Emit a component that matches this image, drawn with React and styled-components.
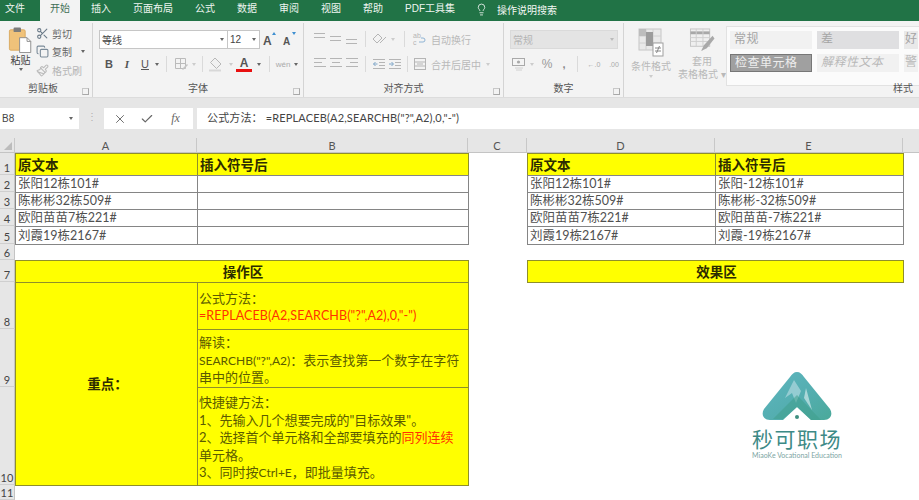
import React from "react";
import styled, { createGlobalStyle } from "styled-components";
import { Scissors, Copy, Paintbrush, Lightbulb, X, Check } from "lucide-react";

const GlobalStyle = createGlobalStyle`
	html, body {
		margin: 0;
		padding: 0;
		height: 500px;
		overflow: hidden;
		background: #ffffff;
		font-family: "Liberation Sans", "Noto Sans CJK SC", sans-serif;
	}
`;

const CJK = `"Liberation Sans", "Noto Sans CJK SC", sans-serif`;
const SHEET_FONT = `Lato, "Noto Sans CJK SC", sans-serif`;

const Page = styled.div`
	width: 919px;
	height: 500px;
	display: flex;
	flex-direction: column;
	overflow: hidden;
`;

/* tabs */
const TabBar = styled.div`
	height: 21px;
	box-sizing: border-box;
	background: #217346;
	display: flex;
	align-items: flex-start;
	color: #f4f8f5;
	font-size: 10px;
	flex-shrink: 0;
`;
const Tab = styled.div`
	height: ${(p) => (p.$active ? "21px" : "20px")};
	line-height: 17px;
	padding: 0 ${(p) => p.$pad ?? 11}px 0 ${(p) => p.$padLeft ?? p.$pad ?? 11}px;
	background: ${(p) => (p.$active ? "#f3f3f3" : "transparent")};
	color: ${(p) => (p.$active ? "#3f6f55" : "#eef5f0")};
`;
const Search = styled.div`
	margin-left: 9px;
	display: flex;
	align-items: center;
	gap: 9px;
	height: 18px;
`;

/* ribbon */
const Ribbon = styled.div`
	height: 77px;
	background: #f3f3f3;
	display: flex;
	flex-shrink: 0;
	padding-top: 2px;
	box-sizing: border-box;
	border-bottom: 1px solid #dcdcdc;
`;
const Group = styled.div`
	width: ${(p) => p.$w}px;
	flex-shrink: 0;
	display: flex;
	flex-direction: column;
	position: relative;
	border-right: ${(p) => (p.$last ? "none" : "1px solid #d4d4d4")};
	box-sizing: border-box;
	height: 74px;
`;
const GroupBody = styled.div`
	flex: 1;
	display: flex;
	min-height: 0;
`;
const GroupLabel = styled.div`
	height: 16px;
	line-height: 15px;
	text-align: ${(p) => p.$align ?? "center"};
	font-size: 10px;
	color: #555;
	padding-right: ${(p) => p.$right ?? 0}px;
`;
const Launcher = styled.span`
	position: absolute;
	right: 3px;
	bottom: 2px;
	width: 5px;
	height: 5px;
	border: 1px solid #a8a8a8;
	border-top-color: #c8c8c8;
	border-left-color: #c8c8c8;
`;
const PasteColumn = styled.div`
	width: 31px;
	flex-shrink: 0;
	padding: 4px 0 0 5px;
	font-size: 10px;
	color: #444;
	line-height: 13px;
	display: flex;
	flex-direction: column;
	align-items: center;
	gap: 1px;
`;
const ClipColumn = styled.div`
	display: flex;
	flex-direction: column;
	gap: 2.5px;
	padding: 2px 0 0 0;
	font-size: 10px;
`;
const ClipRow = styled.div`
	height: 16px;
	display: flex;
	align-items: center;
	gap: 3px;
	white-space: nowrap;
	color: ${(p) => (p.$dim ? "#b5b5b5" : "#666")};
`;
const Stack = styled.div`
	display: flex;
	flex-direction: column;
	padding: ${(p) => p.$pad ?? "6px 0 0 7px"};
	gap: ${(p) => p.$gap ?? 6}px;
`;
const ToolRow = styled.div`
	height: 20px;
	display: flex;
	align-items: center;
`;
const SelectBox = styled.div`
	width: ${(p) => p.$w}px;
	height: 19px;
	box-sizing: border-box;
	background: ${(p) => (p.$off ? "#e4e4e4" : "#ffffff")};
	border: 1px solid ${(p) => (p.$off ? "#dadada" : "#c6c6c6")};
	display: flex;
	align-items: center;
	justify-content: space-between;
	padding: 0 3px 0 2px;
	font-size: 10px;
	color: ${(p) => (p.$off ? "#b4b4b4" : "#444")};
	margin-left: -1px;
`;
const Tool = styled.span`
	display: inline-flex;
	justify-content: center;
	align-items: center;
	width: ${(p) => p.$w ?? 18}px;
	font-family: ${(p) => (p.$serif ? `"Liberation Serif", serif` : CJK)};
	font-size: ${(p) => p.$size ?? 11}px;
	font-weight: ${(p) => (p.$bold ? 700 : 400)};
	font-style: ${(p) => (p.$italic ? "italic" : "normal")};
	text-decoration: ${(p) => (p.$under ? "underline" : "none")};
	color: ${(p) => p.$color ?? "#555"};
`;
const FontColor = styled(Tool)`
	border-bottom: 3px solid #e81010;
	line-height: 12px;
`;
const Caret = styled.span`
	display: inline-block;
	flex-shrink: 0;
	width: 0;
	height: 0;
	border-left: 2.5px solid transparent;
	border-right: 2.5px solid transparent;
	border-top: 3px solid ${(p) => p.$color ?? "#666"};
	margin: 0 ${(p) => p.$gap ?? 4}px;
`;
const Sep = styled.span`
	width: 1px;
	height: 16px;
	background: #dadada;
	margin: 0 ${(p) => p.$gap ?? 4}px;
`;
const DimText = styled.span`
	font-size: 10px;
	color: #b9b9b9;
	margin-left: 3px;
	white-space: nowrap;
`;
const BigButton = styled.div`
	width: ${(p) => p.$w}px;
	flex-shrink: 0;
	display: flex;
	flex-direction: column;
	align-items: center;
	padding-top: 5px;
	font-size: 10px;
	line-height: 13px;
	color: #b9b9b9;
	text-align: center;
	gap: 2px;
	white-space: nowrap;
`;
const Gallery = styled.div`
	flex: 1;
	height: 50px;
	margin: 3px 0 0 0;
	background: #fbfbfb;
	border: 1px solid #e2e2e2;
	border-right: none;
	display: grid;
	grid-template-columns: 82px 82px 14px;
	grid-template-rows: 18px 18px;
	gap: 5px;
	padding: 4px 3px;
	overflow: hidden;
`;
const StyleCell = styled.div`
	background: ${(p) => p.$bg ?? "#f1f1f1"};
	border: ${(p) => (p.$boxed ? "1.5px solid #777" : "none")};
	box-sizing: border-box;
	color: ${(p) => p.$color ?? "#a5a5a5"};
	font-size: 12px;
	font-style: ${(p) => (p.$italic ? "italic" : "normal")};
	line-height: 17px;
	padding-left: ${(p) => (p.$tight ? 1 : 4)}px;
	letter-spacing: ${(p) => (p.$tight ? 0 : 0.5)}px;
	white-space: nowrap;
`;

/* formula bar */
const FormulaBar = styled.div`
	height: 40px;
	box-sizing: border-box;
	background: #e6e6e6;
	display: flex;
	align-items: flex-start;
	padding-top: 10px;
	flex-shrink: 0;
`;
const NameBox = styled.div`
	width: 79px;
	height: 21px;
	background: #fff;
	display: flex;
	align-items: center;
	justify-content: space-between;
	padding: 0 6px 0 2px;
	box-sizing: border-box;
	font-size: 10px;
	color: #444;
`;
const Grip = styled.div`
	width: 25px;
	text-align: center;
	line-height: 18px;
	color: #b0b0b0;
	font-size: 10px;
`;
const FxBox = styled.div`
	width: 89px;
	height: 21px;
	background: #fff;
	display: flex;
	align-items: center;
	justify-content: space-around;
	padding: 0 2px;
	box-sizing: border-box;
	color: #666;
`;
const FormulaInput = styled.div`
	flex: 1;
	height: 21px;
	margin-left: 4px;
	background: #fff;
	padding-left: 10px;
	line-height: 20px;
	font-family: ${SHEET_FONT};
	font-size: 11px;
	letter-spacing: 0.15px;
	color: #444;
	white-space: nowrap;
`;

/* sheet */
const Sheet = styled.div`
	position: relative;
	flex: 1;
	display: grid;
	grid-template-columns: 15px 182px 271px 59px 188px 188px 16px;
	grid-template-rows: 15px 22px 17px 17px 17px 18px 16px 22px 47px 58px 98px 15px;
	background: #fff;
	font-family: ${SHEET_FONT};
	font-size: 13px;
	color: #444;
`;
const ColHead = styled.div`
	grid-column: ${(p) => p.$col};
	grid-row: 1;
	background: #e6e6e6;
	border-right: ${(p) => (p.$plain ? "none" : "1px solid #c8c8c8")};
	border-bottom: 1px solid #c4c4c4;
	box-sizing: border-box;
	text-align: center;
	font-size: 11px;
	line-height: 15px;
	color: #555;
`;
const Corner = styled(ColHead)`
	position: relative;
	&::after {
		content: "";
		position: absolute;
		right: 2px;
		bottom: 2px;
		border-left: 8px solid transparent;
		border-bottom: 8px solid #bcbcbc;
	}
`;
const RowHead = styled.div`
	grid-column: 1;
	grid-row: ${(p) => p.$row};
	background: #e6e6e6;
	border-right: 1px solid #c4c4c4;
	border-bottom: 1px solid #cfcfcf;
	box-sizing: border-box;
	display: flex;
	align-items: flex-end;
	justify-content: center;
	font-size: 11px;
	line-height: 12px;
	color: #444;
`;
const Cell = styled.div`
	grid-column: ${(p) => p.$col};
	grid-row: ${(p) => p.$row};
	box-sizing: border-box;
	margin: 0 -1px -1px 0;
	border: 1px solid ${(p) => (p.$yellow ? "#8f8f2a" : "#858585")};
	background: ${(p) => (p.$yellow ? "#ffff00" : "#ffffff")};
	padding: 0 0 ${(p) => (p.$bold && !p.$center ? 2 : 0)}px 2px;
	display: flex;
	align-items: ${(p) => (p.$center ? "center" : "flex-end")};
	justify-content: ${(p) => (p.$center ? "center" : "flex-start")};
	font-size: ${(p) => (p.$bold ? 13.5 : 12.5)}px;
	font-weight: ${(p) => (p.$bold ? 700 : 400)};
	color: ${(p) => (p.$bold ? "#2c2c00" : "#505050")};
	line-height: 16px;
	white-space: nowrap;
`;
const NoteCell = styled(Cell)`
	display: block;
	white-space: normal;
	font-size: 13px;
	line-height: ${(p) => p.$line ?? 17.5}px;
	color: #5b5b00;
	padding: ${(p) => p.$top}px 0 0 1px;
`;
const Line = styled.div`
	white-space: nowrap;
`;
const Latin = styled.span`
	font-size: 12px;
`;
const Red = styled.span`
	color: #ff3200;
`;
const RedFormula = styled(Red)`
	font-size: 12.5px;
	letter-spacing: 0.1px;
`;

/* logo over the sheet */
const Logo = styled.div`
	position: absolute;
	left: 747px;
	top: 233px;
	width: 100px;
	display: flex;
	flex-direction: column;
	align-items: center;
`;
const LogoName = styled.div`
	margin-top: 4px;
	font-size: 21px;
	line-height: 24px;
	letter-spacing: 1.5px;
	color: #3d8a86;
	white-space: nowrap;
`;
const LogoSub = styled.div`
	font-size: 7px;
	line-height: 9px;
	color: #7da5a3;
	white-space: nowrap;
`;

const lineStroke = "#b5b5b5";

// 三行对齐图标, widths 控制每行长度, y 控制起始高度
const LinesIcon = ({ widths, x = [0, 0, 0], y = 2, step = 4 }) => (
	<svg width="16" height="16" viewBox="0 0 16 16">
		{widths.map((w, i) => (
			<path key={i} d={`M${2 + x[i]} ${y + i * step}.5h${w}`} stroke={lineStroke} fill="none" />
		))}
	</svg>
);

const PasteIcon = () => (
	<svg width="26" height="26" viewBox="0 0 26 28" style={{ display: "block" }}>
		<rect x="0.5" y="3" width="17" height="22" rx="1.5" fill="#f0c27a" stroke="#d9a95f" />
		<rect x="5" y="0.5" width="8" height="5" rx="1" fill="#7c7c7c" />
		<path d="M11.5 11.5h8l4 4v12h-12z" fill="#fff" stroke="#8a8a8a" />
		<path d="M19.5 11.5v4h4" fill="none" stroke="#8a8a8a" />
	</svg>
);

const GrowIcon = ({ up }) => (
	<svg width="16" height="16" viewBox="0 0 16 16">
		<text x="1" y="14" fontSize={up ? 12 : 10} fill="#555" fontFamily="Liberation Sans" fontWeight="700">A</text>
		<path d={up ? "M10 4l2-3 2 3z" : "M10 1l2 3 2-3z"} fill="#3e8fd0" />
	</svg>
);

const BorderIcon = () => (
	<svg width="16" height="16" viewBox="0 0 16 16">
		<path d="M2.5 2.5h10v10h-10zM2.5 7.5h10M7.5 2.5v10" stroke="#bbb" fill="none" />
		<path d="M9 13l5-5 1 1-5 5z" fill="#c4c4c4" />
	</svg>
);

const FillIcon = () => (
	<svg width="16" height="16" viewBox="0 0 16 16">
		<path d="M7 2l6 6-4.5 4.5-6-6z" fill="#f1f1f1" stroke="#b8b8b8" />
		<path d="M1 13.5h12v2H1z" fill="#d8d8d8" />
	</svg>
);

const CondIcon = () => (
	<svg width="26" height="30" viewBox="0 0 26 30">
		<rect x="1" y="1" width="22" height="21" fill="#e9e9e9" stroke="#c6c6c6" />
		<path d="M1 8h22M1 15h22M8 1v21M15 1v21" stroke="#d0d0d0" />
		<rect x="8" y="4" width="7" height="14" fill="#9c9c9c" />
		<rect x="1" y="1" width="7" height="7" fill="#bdbdbd" />
		<rect x="15" y="15" width="10" height="13" fill="#fff" stroke="#9f9f9f" />
		<path d="M17 20h6M17 23h6M21.5 18l-3 7" stroke="#888" fill="none" />
	</svg>
);

const TableIcon = () => (
	<svg width="26" height="26" viewBox="0 0 26 26">
		<rect x="1" y="1" width="20" height="18" fill="#efefef" stroke="#c4c4c4" />
		<path d="M1 5h20" stroke="#a8a8a8" strokeWidth="3" />
		<path d="M1 10h20M1 14h20M7 1v18M14 1v18" stroke="#cfcfcf" />
		<path d="M24 8l-9 10-3 6 6-3 8-10z" fill="#a9a9a9" />
	</svg>
);

const CurrencyIcon = () => (
	<svg width="16" height="16" viewBox="0 0 16 16">
		<rect x="1.5" y="2.5" width="12" height="7" fill="#f4f4f4" stroke="#a9a9a9" />
		<circle cx="7.5" cy="6" r="1.6" fill="#a9a9a9" />
		<path d="M4 12h8M5 14h6" stroke="#d0d0d0" />
	</svg>
);

const WrapIcon = () => (
	<svg width="16" height="16" viewBox="0 0 16 16">
		<text x="1" y="7" fontSize="7" fill="#b5b5b5" fontFamily="Liberation Sans">ab</text>
		<text x="1" y="14" fontSize="7" fill="#b5b5b5" fontFamily="Liberation Sans">c</text>
		<path d="M7 11h4a2 2 0 0 0 0-4H9" stroke="#8fb4d4" fill="none" />
	</svg>
);

const MergeIcon = () => (
	<svg width="16" height="16" viewBox="0 0 16 16">
		<rect x="2.5" y="2.5" width="11" height="11" fill="none" stroke="#b5b5b5" />
		<path d="M2.5 6h11M2.5 10h11M5 8h6" stroke="#b5b5b5" />
	</svg>
);

const OrientIcon = () => (
	<svg width="18" height="16" viewBox="0 0 18 16">
		<path d="M2 8l5-5 4 4-5 5zM9 12l6-6" stroke="#b5b5b5" fill="none" />
	</svg>
);

const IndentIcon = ({ flip }) => (
	<svg width="16" height="16" viewBox="0 0 16 16">
		<path d="M2 3.5h12M8 6.5h6M8 9.5h6M2 12.5h12" stroke={lineStroke} fill="none" />
		<path d={flip ? "M2 8h4M4.5 6l2 2-2 2" : "M2.5 8h4M4.5 6l-2 2 2 2"} stroke="#7fa6c8" fill="none" />
	</svg>
);

const LogoMark = () => (
	<svg width="72" height="52" viewBox="0 0 72 52">
		<defs>
			<linearGradient id="mountain" x1="0" y1="0" x2="1" y2="1">
				<stop offset="0" stopColor="#5fb6c0" />
				<stop offset="0.55" stopColor="#54aeb0" />
				<stop offset="1" stopColor="#4aa99a" />
			</linearGradient>
		</defs>
		<path
			d="M36 1c3 0 5 2 7 5l26 32c3 5 1 11-6 11H50L36 36 22 49H9c-7 0-9-6-6-11L29 6c2-3 4-5 7-5z"
			fill="url(#mountain)"
		/>
		<path d="M33 9l-9 18 7-5 4 10 5-12z" fill="#a9d6dc" opacity="0.75" />
		<path d="M45 17l6 22-8-12z" fill="#cfe8ea" opacity="0.7" />
		<path d="M36 24L12 48h10l14-12 14 13h10z" fill="#3f9f8d" opacity="0.55" />
		<circle cx="36" cy="46" r="2" fill="#3f8f80" />
	</svg>
);

const columns = ["A", "B", "C", "D", "E"];
const rowHeads = [1, 2, 3, 4, 5, 6, 7, 8, 9, 10, 11];
const source = ["张阳12栋101#", "陈彬彬32栋509#", "欧阳苗苗7栋221#", "刘霞19栋2167#"];
const filled = ["张阳-12栋101#", "陈彬彬-32栋509#", "欧阳苗苗-7栋221#", "刘霞-19栋2167#"];

const App = () => {
	return (
		<Page>
			<GlobalStyle />
			<TabBar>
				<Tab $padLeft={5} $pad={15}>文件</Tab>
				<Tab $active $pad={10}>开始</Tab>
				<Tab>插入</Tab>
				<Tab>页面布局</Tab>
				<Tab>公式</Tab>
				<Tab>数据</Tab>
				<Tab>审阅</Tab>
				<Tab>视图</Tab>
				<Tab>帮助</Tab>
				<Tab>PDF工具集</Tab>
				<Search>
					<Lightbulb size={13} strokeWidth={1.5} />
					操作说明搜索
				</Search>
			</TabBar>
			<Ribbon>
				<Group $w={93}>
					<GroupBody>
						<PasteColumn>
							<PasteIcon />
							<div>粘贴</div>
							<Caret $gap={0} />
						</PasteColumn>
						<ClipColumn>
							<ClipRow><Scissors size={13} color="#6a7a88" />剪切</ClipRow>
							<ClipRow><Copy size={13} color="#7a8a98" />复制<Caret $gap={6} /></ClipRow>
							<ClipRow $dim><Paintbrush size={13} color="#bbb" />格式刷</ClipRow>
						</ClipColumn>
					</GroupBody>
					<GroupLabel $right={6}>剪贴板</GroupLabel>
					<Launcher />
				</Group>
				<Group $w={211}>
					<GroupBody>
						<Stack $gap={5}>
							<ToolRow>
								<SelectBox $w={129}>等线<Caret $gap={0} /></SelectBox>
								<SelectBox $w={33}>12<Caret $gap={0} /></SelectBox>
								<Tool $w={20}><GrowIcon up /></Tool>
								<Tool $w={20}><GrowIcon /></Tool>
							</ToolRow>
							<ToolRow>
								<Tool $bold $w={18}>B</Tool>
								<Tool $italic $serif $bold $w={18}>I</Tool>
								<Tool $under $w={18}>U</Tool>
								<Caret $gap={1} />
								<Sep $gap={6} />
								<BorderIcon />
								<Caret $gap={3} $color="#ccc" />
								<Sep $gap={3} />
								<Tool $w={20}><FillIcon /></Tool>
								<Caret $gap={3} $color="#ccc" />
								<FontColor $w={16} $bold $size={12}>A</FontColor>
								<Caret $gap={5} />
								<Sep $gap={3} />
								<Tool $w={20} $size={8} $color="#aaa">wén</Tool>
								<Caret $gap={1} />
							</ToolRow>
						</Stack>
					</GroupBody>
					<GroupLabel>字体</GroupLabel>
					<Launcher />
				</Group>
				<Group $w={200}>
					<GroupBody>
						<Stack $gap={5} $pad="6px 0 0 8px">
							<ToolRow>
								<LinesIcon widths={[11, 11, 0]} y={2} />
								<LinesIcon widths={[11, 11, 0]} y={5} />
								<LinesIcon widths={[11, 11, 0]} y={8} />
								<Sep $gap={5} />
								<OrientIcon />
								<Caret $gap={2} $color="#ccc" />
								<Sep $gap={7} />
								<WrapIcon />
								<DimText>自动换行</DimText>
							</ToolRow>
							<ToolRow>
								<LinesIcon widths={[12, 8, 12]} />
								<LinesIcon widths={[12, 8, 12]} x={[0, 2, 0]} />
								<LinesIcon widths={[12, 8, 12]} x={[0, 4, 0]} />
								<Sep $gap={5} />
								<IndentIcon />
								<IndentIcon flip />
								<Sep $gap={4} />
								<MergeIcon />
								<DimText>合并后居中</DimText>
								<Caret $gap={5} $color="#ccc" />
							</ToolRow>
						</Stack>
					</GroupBody>
					<GroupLabel>对齐方式</GroupLabel>
					<Launcher />
				</Group>
				<Group $w={120}>
					<GroupBody>
						<Stack $gap={5}>
							<ToolRow>
								<SelectBox $off $w={108}>常规<Caret $gap={0} $color="#bbb" /></SelectBox>
							</ToolRow>
							<ToolRow>
								<CurrencyIcon />
								<Caret $gap={3} $color="#ccc" />
								<Tool $w={20} $size={12} $color="#999">%</Tool>
								<Tool $w={14} $bold $color="#888">,</Tool>
								<Sep $gap={6} />
								<Tool $w={20} $size={7} $color="#aaa">←.0</Tool>
								<Tool $w={20} $size={7} $color="#aaa">.00</Tool>
							</ToolRow>
						</Stack>
					</GroupBody>
					<GroupLabel>数字</GroupLabel>
					<Launcher />
				</Group>
				<Group $w={295} $last>
					<GroupBody>
						<BigButton $w={54}>
							<CondIcon />
							<span>条件格式</span>
							<Caret $gap={0} $color="#ccc" />
						</BigButton>
						<BigButton $w={48}>
							<TableIcon />
							<span>套用<br />表格格式 ▾</span>
						</BigButton>
						<Gallery>
							<StyleCell>常规</StyleCell>
							<StyleCell $bg="#dfdfe1">差</StyleCell>
							<StyleCell $bg="#e9e9e9" $tight>好</StyleCell>
							<StyleCell $bg="#a0a0a0" $color="#eeeeee" $boxed>检查单元格</StyleCell>
							<StyleCell $italic $color="#b8b8b8">解释性文本</StyleCell>
							<StyleCell $color="#b8b8b8" $tight>警</StyleCell>
						</Gallery>
					</GroupBody>
					<GroupLabel $align="right" $right={6}>样式</GroupLabel>
				</Group>
			</Ribbon>
			<FormulaBar>
				<NameBox>B8<Caret $gap={0} /></NameBox>
				<Grip>⋮</Grip>
				<FxBox>
					<X size={14} strokeWidth={1.6} />
					<Check size={14} strokeWidth={2} />
					<Tool $italic $serif $size={12} $color="#666">fx</Tool>
				</FxBox>
				<FormulaInput>公式方法：&nbsp;=REPLACEB(A2,SEARCHB("?",A2),0,"-")</FormulaInput>
			</FormulaBar>
			<Sheet>
				<Corner $col={1} />
				{columns.map((c, i) => (
					<ColHead key={c} $col={i + 2}>{c}</ColHead>
				))}
				<ColHead $col={7} $plain />
				{rowHeads.map((r) => (
					<RowHead key={r} $row={r + 1}>{r}</RowHead>
				))}

				<Cell $col={2} $row={2} $yellow $bold>原文本</Cell>
				<Cell $col={3} $row={2} $yellow $bold>插入符号后</Cell>
				<Cell $col={5} $row={2} $yellow $bold>原文本</Cell>
				<Cell $col={6} $row={2} $yellow $bold>插入符号后</Cell>
				{source.map((text, i) => (
					<React.Fragment key={text}>
						<Cell $col={2} $row={i + 3}>{text}</Cell>
						<Cell $col={3} $row={i + 3} />
						<Cell $col={5} $row={i + 3}>{text}</Cell>
						<Cell $col={6} $row={i + 3}>{filled[i]}</Cell>
					</React.Fragment>
				))}

				<Cell $col="2 / 4" $row={8} $yellow $bold $center>操作区</Cell>
				<Cell $col="5 / 7" $row={8} $yellow $bold $center>效果区</Cell>
				<Cell $col={2} $row="9 / 12" $yellow $bold $center>重点：</Cell>
				<NoteCell $col={3} $row={9} $yellow $top={7} $line={17}>
					<Line>公式方法：</Line>
					<Line><RedFormula>=REPLACEB(A2,SEARCHB("?",A2),0,"-")</RedFormula></Line>
				</NoteCell>
				<NoteCell $col={3} $row={10} $yellow $top={4}>
					<Line>解读：</Line>
					<Line><Latin>SEARCHB("?",A2)</Latin>：表示查找第一个数字在字符</Line>
					<Line>串中的位置。</Line>
				</NoteCell>
				<NoteCell $col={3} $row={11} $yellow $top={6}>
					<Line>快捷键方法：</Line>
					<Line>1、先输入几个想要完成的"目标效果"。</Line>
					<Line>2、选择首个单元格和全部要填充的<Red>同列连续</Red></Line>
					<Line>单元格。</Line>
					<Line>3、同时按<Latin>Ctrl+E</Latin>，即批量填充。</Line>
				</NoteCell>

				<Logo>
					<LogoMark />
					<LogoName>秒可职场</LogoName>
					<LogoSub>MiaoKe Vocational Education</LogoSub>
				</Logo>
			</Sheet>
		</Page>
	);
};

export default App;
